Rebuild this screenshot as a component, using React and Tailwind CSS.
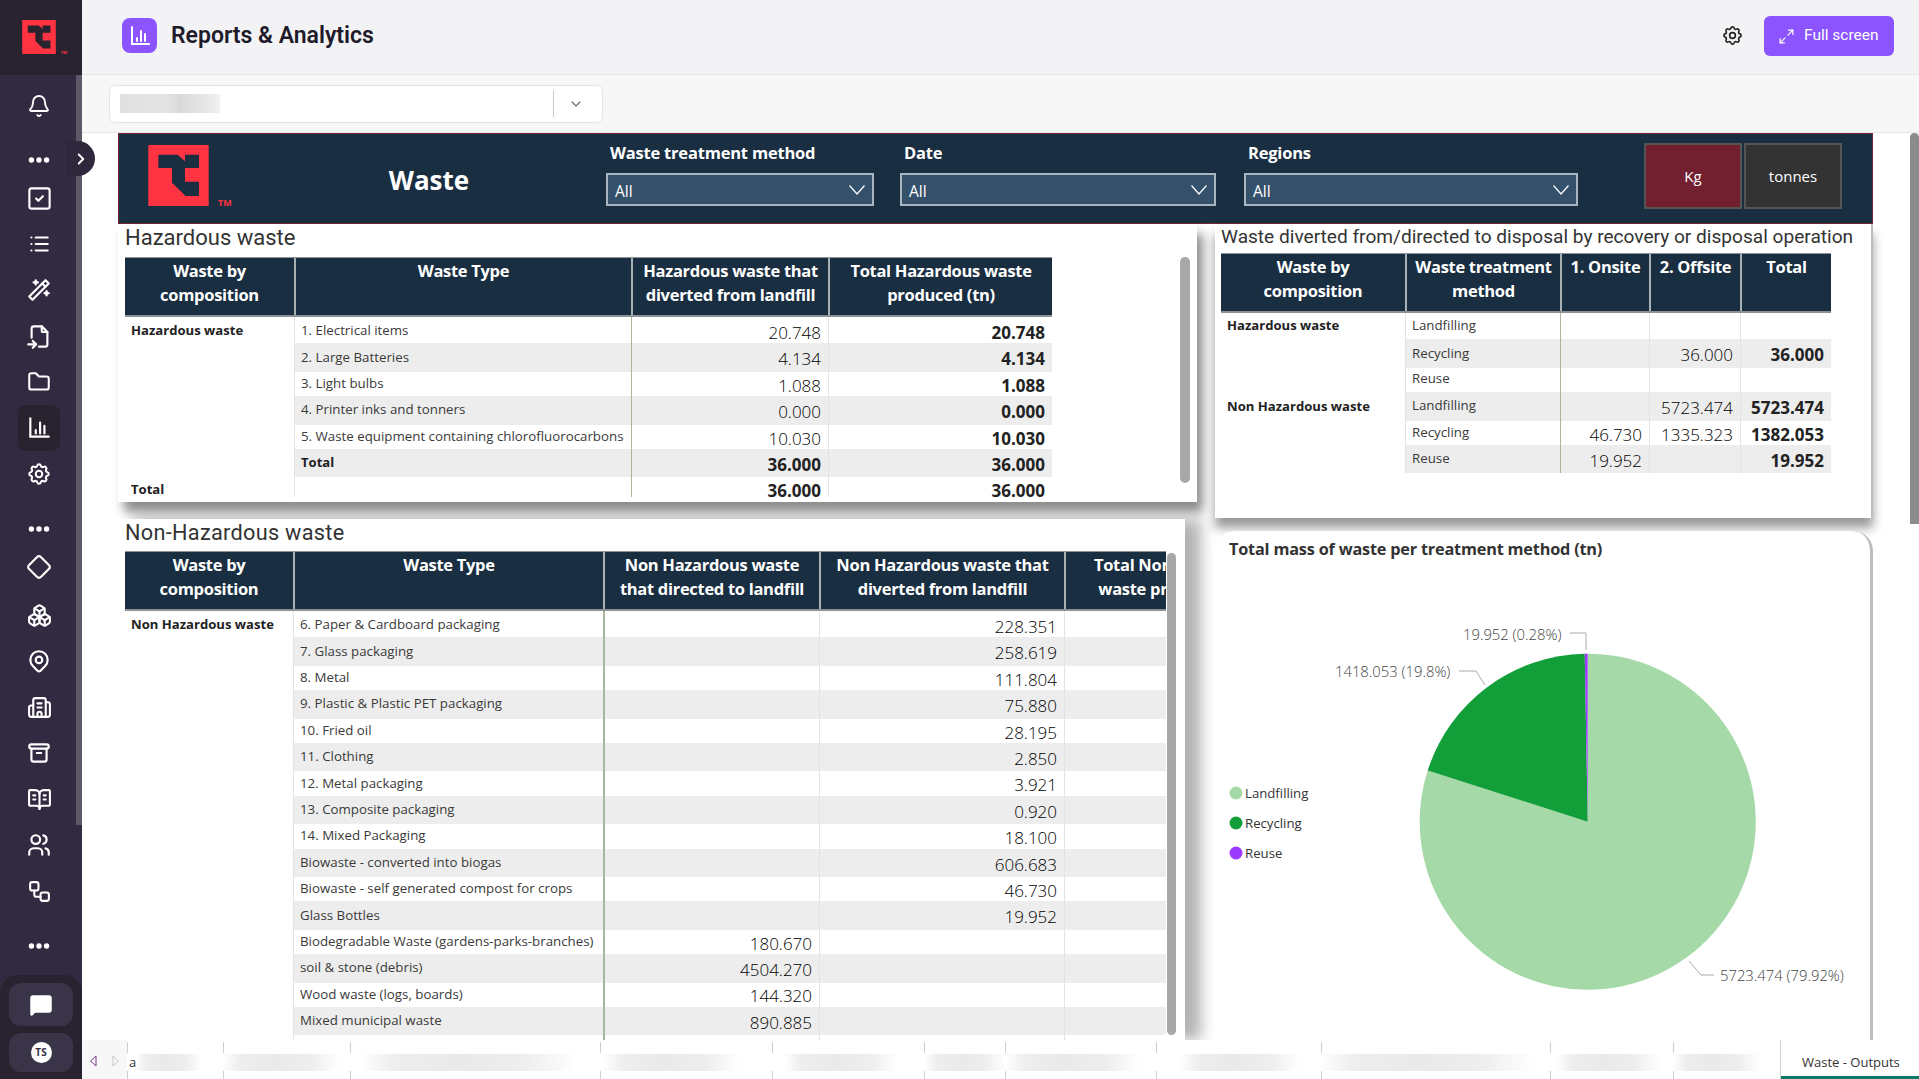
import React from 'react';
import { Bell, Boxes, BookOpenText, Building2, Diamond, Maximize2, MessageSquare, Workflow, ChevronDown, ChevronRight } from 'lucide-react';
import { TbDots, TbSquareCheck, TbList, TbWand, TbFileImport, TbFolder, TbSettings, TbMapPin, TbArchive, TbUsers } from 'react-icons/tb';

const ChartIcon = ({ className }) => (
  <svg viewBox="0 0 24 24" fill="none" stroke="currentColor" strokeWidth="2" strokeLinecap="round" className={className}>
    <path d="M4 3v17h17" />
    <path d="M9 14v3M13 7v10M17 10v7" />
  </svg>
);

const Logo = ({ className, glyph }) => (
  <svg viewBox="0 0 181 183" className={className}>
    <rect width="181" height="183" fill="#ff3341" />
    <path d="M30 29H88L110 49V29H152V69H110V110H152V153H112L71 113V69H30Z" fill={glyph} />
  </svg>
);

const Blur = ({ className }) => (
  <div className={`h-[17px] bg-[linear-gradient(90deg,#ffffff,#eeeeee_15%,#e8e9e8_45%,#eeeeee_75%,#ffffff)] ${className}`} />
);

const NavItem = ({ children, className = '' }) => (
  <div className={`flex h-[46px] items-center justify-center text-white ${className}`}>{children}</div>
);

const Dots = ({ className = '' }) => (
  <div className={`flex h-[30px] items-center justify-center text-white ${className}`}>
    <TbDots size={26} strokeWidth={3} />
  </div>
);

const Sidebar = () => (
  <aside className="relative flex w-[82px] shrink-0 flex-col bg-[#322a41]">
    <div className="flex h-[75px] shrink-0 items-start bg-[#29232f] pl-[22px] pt-[20px]">
      <Logo className="h-[34px] w-[34px]" glyph="#29232f" />
      <span className="ml-[5px] mt-[30px] text-[4px] font-bold text-[#ff3341]">TM</span>
    </div>
    <nav className="flex w-[76px] flex-col pt-[8px] pl-[2px]">
      <NavItem><Bell size={24} strokeWidth={1.8} /></NavItem>
      <Dots className="mt-[16px]" />
      <NavItem><TbSquareCheck size={27} strokeWidth={1.9} /></NavItem>
      <NavItem><TbList size={26} strokeWidth={2} /></NavItem>
      <NavItem><TbWand size={26} strokeWidth={2} /></NavItem>
      <NavItem><TbFileImport size={27} strokeWidth={1.9} /></NavItem>
      <NavItem><TbFolder size={26} strokeWidth={1.9} /></NavItem>
      <NavItem className="mx-[16px] rounded-lg bg-[#29232f] text-[#b9c3f7]"><ChartIcon className="h-[26px] w-[26px]" /></NavItem>
      <NavItem><TbSettings size={26} strokeWidth={1.9} /></NavItem>
      <Dots className="mt-[17px]" />
      <NavItem><Diamond size={26} strokeWidth={2} /></NavItem>
      <NavItem className="mt-[2px]"><Boxes size={25} strokeWidth={2} /></NavItem>
      <NavItem><TbMapPin size={26} strokeWidth={2} /></NavItem>
      <NavItem><Building2 size={25} strokeWidth={2} /></NavItem>
      <NavItem><TbArchive size={26} strokeWidth={2} /></NavItem>
      <NavItem><BookOpenText size={25} strokeWidth={2} /></NavItem>
      <NavItem><TbUsers size={26} strokeWidth={2} /></NavItem>
      <NavItem><Workflow size={25} strokeWidth={2} /></NavItem>
      <Dots className="mt-[17px]" />
    </nav>
    <div className="mt-auto flex h-[104px] flex-col gap-[7px] rounded-t-[18px] bg-[#29232f] px-[9px] pt-[8px]">
      <div className="flex h-[43px] items-center justify-center rounded-xl bg-[#3a3448] text-white">
        <MessageSquare size={24} fill="currentColor" strokeWidth={1.5} />
      </div>
      <div className="flex h-[39px] items-center justify-center rounded-xl bg-[#3a3448]">
        <div className="flex h-[21px] w-[21px] items-center justify-center rounded-full bg-white text-[10px] font-bold text-[#322a41]">TS</div>
      </div>
    </div>
    <div className="absolute left-[76px] top-[75px] h-[750px] w-[6px] bg-[#5d5767]" />
    <div className="absolute left-[66px] top-[141px] z-20 flex h-[35px] w-[29px] items-center justify-center rounded-r-full bg-[#2f283c] text-white">
      <ChevronRight size={18} strokeWidth={2.5} />
    </div>
  </aside>
);

const Header = () => (
  <header className="flex h-[75px] shrink-0 items-center border-b border-[#e6e6e8] bg-[#f3f3f5] pb-[3px] pl-[40px] pr-[25px]">
    <div className="flex h-[35px] w-[35px] items-center justify-center rounded-lg bg-[#8b54ff] text-white">
      <ChartIcon className="h-[24px] w-[24px]" />
    </div>
    <h1 className="ml-[14px] pt-[2px] font-['Roboto',sans-serif] text-[23px] font-semibold text-[#1f1b2b]">Reports &amp; Analytics</h1>
    <TbSettings size={23} strokeWidth={1.7} className="ml-auto mr-[20px] text-[#222]" />
    <button className="flex h-[40px] w-[130px] items-center rounded-md bg-[#8b54ff] pl-[14px] pt-[1px] font-['Roboto',sans-serif] text-[15.5px] text-white">
      <Maximize2 size={17} strokeWidth={1.7} />
      <span className="ml-[9px]">Full screen</span>
    </button>
  </header>
);

const FilterBar = () => (
  <div className="flex h-[58px] shrink-0 items-center border-b border-[#e6e6e6] bg-[#f7f7f7] pl-[27px]">
    <div className="flex h-[38px] w-[494px] items-center rounded-md border border-[#e4e4e4] bg-white pl-[10px]">
      <div className="h-[19px] w-[100px] bg-[linear-gradient(90deg,#e0e0e0,#e4e4e4_45%,#d9d9d9_60%,#e6e6e6_85%,#f2f2f2)]" />
      <div className="ml-auto h-[27px] w-px bg-[#c9c9c9]" />
      <ChevronDown size={16} className="ml-[14px] mr-[18px] text-[#666]" strokeWidth={1.6} />
    </div>
  </div>
);

const Slicer = ({ label, className }) => (
  <div className={`flex flex-col pt-[7px] ${className}`}>
    <span className="ml-[4px] h-[23px] text-[16.5px] font-bold leading-[23px] tracking-[-0.2px] text-white">{label}</span>
    <div className="mt-[9px] flex h-[33px] items-center justify-between border-2 border-[#aab6bf] bg-[#34506b] pl-[7px] pr-[7px] text-[15.5px] text-white">
      <span className="pt-[5px]">All</span>
      <svg viewBox="0 0 16 10" className="h-[10px] w-[16px]" fill="none" stroke="#ffffff" strokeWidth="1.2"><path d="M0.5 0.5L8 9L15.5 0.5" /></svg>
    </div>
  </div>
);

const Banner = () => (
  <div className="flex h-[91px] w-[1755px] shrink-0 border border-[#7a2535] bg-[#1a2e42]">
    <div className="flex w-[129px] shrink-0 items-start pl-[29px] pt-[11px]">
      <Logo className="h-[61px] w-[61px]" glyph="#1a2e42" />
      <span className="ml-[9px] mt-[53px] text-[9px] font-bold leading-[10px] text-[#ff3341]">TM</span>
    </div>
    <div className="flex w-[358px] shrink-0 items-center justify-center pl-[4px] pt-[3px] text-[26px] font-bold text-white">Waste</div>
    <Slicer label="Waste treatment method" className="w-[268px] shrink-0" />
    <Slicer label="Date" className="ml-[26px] w-[316px] shrink-0" />
    <Slicer label="Regions" className="ml-[28px] w-[334px] shrink-0" />
    <div className="ml-[66px] mt-[9px] flex h-[66px] w-[98px] shrink-0 items-center justify-center border-2 border-[#555] bg-[#72202f] text-[15px] text-white">Kg</div>
    <div className="ml-[2px] mt-[9px] flex h-[66px] w-[98px] shrink-0 items-center justify-center border-2 border-[#555] bg-[#333333] text-[15px] text-white">tonnes</div>
  </div>
);

const cellStyles = {
  group: 'pl-[6px] text-[13.1px] font-bold text-[#222]',
  label: 'pl-[6px] text-[13.3px] text-[#3a3a3a]',
  labelBold: 'pl-[6px] text-[13.1px] font-bold text-[#222]',
  num: 'justify-end pr-[7px] pt-[3px] text-[17px] font-light text-black',
  total: 'justify-end pr-[7px] pt-[3px] text-[17px] font-bold text-[#222]',
};

const ReportTable = ({ gridClass, widthClass, headers, lines, rows }) => (
  <div className={widthClass}>
    <div className={`grid h-[60px] border-y border-b-2 border-[#8d9296] bg-[#1a2e42] ${gridClass}`}>
      {headers.map((h, i) => (
        <div key={i} className={`whitespace-pre-line pt-[1px] text-center text-[16.5px] font-bold leading-[24px] tracking-[-0.3px] text-white ${i > 0 ? 'border-l-2 border-[#a9b0b4]' : ''}`}>{h}</div>
      ))}
    </div>
    {rows.map((row, r) => (
      <div key={r} className={`grid h-[26.4px] ${gridClass}`}>
        {row.cells.map((c, i) => (
          <div key={i} className={`flex items-center whitespace-nowrap ${lines[i]} ${row.shaded && i > 0 ? 'bg-[#ededed]' : ''} ${c ? cellStyles[c[0]] : ''}`}>
            {c ? c[1] : ''}
          </div>
        ))}
      </div>
    ))}
  </div>
);

const hazardRows = [
  { cells: [['group', 'Hazardous waste'], ['label', '1. Electrical items'], ['num', '20.748'], ['total', '20.748']] },
  { shaded: true, cells: [null, ['label', '2. Large Batteries'], ['num', '4.134'], ['total', '4.134']] },
  { cells: [null, ['label', '3. Light bulbs'], ['num', '1.088'], ['total', '1.088']] },
  { shaded: true, cells: [null, ['label', '4. Printer inks and tonners'], ['num', '0.000'], ['total', '0.000']] },
  { cells: [null, ['label', '5. Waste equipment containing chlorofluorocarbons'], ['num', '10.030'], ['total', '10.030']] },
  { shaded: true, cells: [null, ['labelBold', 'Total'], ['total', '36.000'], ['total', '36.000']] },
  { cells: [['group', 'Total'], null, ['total', '36.000'], ['total', '36.000']] },
];

const nonHazardData = [
  ['6. Paper & Cardboard packaging', '', '228.351'],
  ['7. Glass packaging', '', '258.619'],
  ['8. Metal', '', '111.804'],
  ['9. Plastic & Plastic PET packaging', '', '75.880'],
  ['10. Fried oil', '', '28.195'],
  ['11. Clothing', '', '2.850'],
  ['12. Metal packaging', '', '3.921'],
  ['13. Composite packaging', '', '0.920'],
  ['14. Mixed Packaging', '', '18.100'],
  ['Biowaste - converted into biogas', '', '606.683'],
  ['Biowaste - self generated compost for crops', '', '46.730'],
  ['Glass Bottles', '', '19.952'],
  ['Biodegradable Waste (gardens-parks-branches)', '180.670', ''],
  ['soil & stone (debris)', '4504.270', ''],
  ['Wood waste (logs, boards)', '144.320', ''],
  ['Mixed municipal waste', '890.885', ''],
  ['', '', ''],
];

const nonHazardRows = nonHazardData.map((d, i) => ({
  shaded: i % 2 === 1,
  cells: [
    i === 0 ? ['group', 'Non Hazardous waste'] : null,
    ['label', d[0]],
    d[1] ? ['num', d[1]] : null,
    d[2] ? ['num', d[2]] : null,
    null,
  ],
}));

const disposalRows = [
  { cells: [['group', 'Hazardous waste'], ['label', 'Landfilling'], null, null, null] },
  { shaded: true, cells: [null, ['label', 'Recycling'], null, ['num', '36.000'], ['total', '36.000']] },
  { cells: [null, ['label', 'Reuse'], null, null, null] },
  { shaded: true, cells: [['group', 'Non Hazardous waste'], ['label', 'Landfilling'], null, ['num', '5723.474'], ['total', '5723.474']] },
  { cells: [null, ['label', 'Recycling'], ['num', '46.730'], ['num', '1335.323'], ['total', '1382.053']] },
  { shaded: true, cells: [null, ['label', 'Reuse'], ['num', '19.952'], null, ['total', '19.952']] },
];

const PieChart = () => (
  <svg viewBox="0 0 652 480" className="h-[480px] w-[652px] font-['Open_Sans',sans-serif]">
    <path d="M372.7 262.7V94.7A168 168 0 1 1 212.7 211.6Z" fill="#a5d9a8" />
    <path d="M372.7 262.7L212.7 211.6A168 168 0 0 1 369.74 94.73Z" fill="#129e38" />
    <path d="M372.7 262.7L369.74 94.73A168 168 0 0 1 372.7 94.7Z" fill="#9b3bff" />
    <g fill="none" stroke="#aaaaaa" strokeWidth="1">
      <path d="M355 74H371V91" />
      <path d="M244 112H261L270 126" />
      <path d="M474 402L486 416H499" />
    </g>
    <g fontSize="14.8" fontWeight="300" fill="#444444">
      <text x="248" y="81">19.952 (0.28%)</text>
      <text x="120" y="118">1418.053 (19.8%)</text>
      <text x="505" y="422">5723.474 (79.92%)</text>
    </g>
    <circle cx="21" cy="234" r="6.5" fill="#a5d9a8" />
    <circle cx="21" cy="264" r="6.5" fill="#129e38" />
    <circle cx="21" cy="294" r="6.5" fill="#9b3bff" />
    <g fontSize="13.2" fill="#333333">
      <text x="30" y="239">Landfilling</text>
      <text x="30" y="269">Recycling</text>
      <text x="30" y="299">Reuse</text>
    </g>
  </svg>
);

const Report = () => (
  <div className="flex min-h-0 flex-1 flex-col overflow-hidden bg-white pl-[36px]">
    <Banner />
    <div className="flex min-h-0 flex-1">
      <div className="flex w-[1079px] shrink-0 flex-col">
        <section className="relative z-10 h-[278px] shrink-0 bg-white pl-[7px] shadow-[6px_10px_10px_rgba(0,0,0,0.45)]">
          <h2 className="h-[33px] font-['Roboto',sans-serif] text-[22px] leading-[28px] text-[#333]">Hazardous waste</h2>
          <div className="h-[240px] overflow-hidden">
            <ReportTable
              widthClass="w-[927px]"
              gridClass="grid-cols-[169px_337px_197px_224px]"
              headers={['Waste by\ncomposition', 'Waste Type', 'Hazardous waste that\ndiverted from landfill', 'Total Hazardous waste\nproduced (tn)']}
              lines={['', 'border-l border-[#e3e3e3]', 'border-l border-[#a9b79e]', 'border-l border-[#e3e3e3]']}
              rows={hazardRows}
            />
          </div>
          <div className="absolute right-[7px] top-[33px] h-[226px] w-[10px] rounded-full bg-[#a8a8a8]" />
        </section>
        <section className="relative z-20 mt-[17px] min-h-0 w-[1067px] flex-1 bg-white pl-[7px] shadow-[16px_0_14px_rgba(0,0,0,0.3)]">
          <h2 className="h-[32px] font-['Roboto',sans-serif] text-[21.7px] leading-[28px] tracking-[0.3px] text-[#333]">Non-Hazardous waste</h2>
          <div className="h-[489px] w-[1041px] overflow-hidden">
            <ReportTable
              widthClass="w-[1165px]"
              gridClass="grid-cols-[168px_310px_216px_245px_226px]"
              headers={['Waste by\ncomposition', 'Waste Type', 'Non Hazardous waste\nthat directed to landfill', 'Non Hazardous waste that\ndiverted from landfill', 'Total Non-Hazardous\nwaste produced (tn)']}
              lines={['', 'border-l border-[#e3e3e3]', 'border-l-2 border-[#a9b79e]', 'border-l border-[#e3e3e3]', 'border-l border-[#e3e3e3]']}
              rows={nonHazardRows}
            />
          </div>
          <div className="absolute right-[9px] top-[34px] h-[482px] w-[9px] rounded-full bg-[#a8a8a8]" />
        </section>
      </div>
      <div className="flex w-[676px] shrink-0 flex-col pl-[18px]">
        <section className="relative z-30 h-[294px] shrink-0 border-r-[2px] border-[#bdbdbd] bg-white pl-[6px] shadow-[0_10px_10px_rgba(0,0,0,0.4)]">
          <h2 className="h-[29px] whitespace-nowrap font-['Roboto',sans-serif] text-[19.1px] leading-[25px] text-[#333]">Waste diverted from/directed to disposal by recovery or disposal operation</h2>
          <ReportTable
            widthClass="w-[610px]"
            gridClass="grid-cols-[184px_155px_89px_91px_91px]"
            headers={['Waste by\ncomposition', 'Waste treatment\nmethod', '1. Onsite', '2. Offsite', 'Total']}
            lines={['', 'border-l border-[#e3e3e3]', 'border-l border-[#a9b79e]', 'border-l border-[#e3e3e3]', 'border-l border-[#e3e3e3]']}
            rows={disposalRows}
          />
        </section>
        <section className="relative z-40 mt-[13px] min-h-0 flex-1 rounded-t-[20px] border-r-[3px] border-[#bdbdbd] bg-white">
          <h2 className="h-[28px] pl-[14px] pt-[6px] text-[16.3px] font-bold leading-[24px] tracking-[-0.2px] text-[#333]">Total mass of waste per treatment method (tn)</h2>
          <PieChart />
        </section>
      </div>
    </div>
  </div>
);

const tabs = [
  { w: 'w-[96px]', patch: 'ml-[0px] w-[66px]' },
  { w: 'w-[127px]', patch: 'ml-[-1px] w-[118px]' },
  { w: 'w-[250px]', patch: 'ml-[10px] w-[219px]' },
  { w: 'w-[172px]', patch: 'ml-[3px] w-[137px]' },
  { w: 'w-[152px]', patch: 'ml-[12px] w-[115px]' },
  { w: 'w-[81px]', patch: 'ml-[1px] w-[80px]' },
  { w: 'w-[151px]', patch: 'ml-[0px] w-[135px]' },
  { w: 'w-[165px]', patch: 'ml-[24px] w-[120px]' },
  { w: 'w-[229px]', patch: 'ml-[-1px] w-[215px]' },
  { w: 'w-[123px]', patch: 'ml-[6px] w-[105px]' },
  { w: 'w-[107px]', patch: 'ml-[0px] w-[87px]' },
];

const TabBar = () => (
  <div className="flex h-[39px] shrink-0 bg-white">
    <div className="flex w-[45px] shrink-0 items-center gap-[15px] bg-[#f7f7f7] pl-[7px] pt-[3px]">
      <svg viewBox="0 0 8 12" className="h-[12px] w-[8px]" fill="none" stroke="#7a3a8c"><path d="M7 1L1.5 6L7 11Z" /></svg>
      <svg viewBox="0 0 8 12" className="h-[12px] w-[8px]" fill="none" stroke="#c4c4c4"><path d="M1 1L6.5 6L1 11Z" /></svg>
    </div>
    {tabs.map((t, i) => (
      <div key={i} className={`relative flex shrink-0 items-center overflow-visible pt-[5px] ${t.w} ${i === 0 ? 'text-[13px] text-[#333]' : ''}`}>
        <div className="absolute bottom-0 left-0 top-[2px] w-px bg-[linear-gradient(180deg,#cfcfcf_0,#cfcfcf_30%,transparent_30%,transparent_78%,#cfcfcf_78%)]" />
        {i === 0 && <span className="ml-[2px] leading-none">a</span>}
        <Blur className={`relative ${t.patch}`} />
      </div>
    ))}
    <div className="flex flex-1 flex-col border-l border-[#cfcfcf]">
      <span className="flex-1 pl-[21px] pt-[13px] text-[13px] leading-[18px] text-[#333]">Waste - Outputs</span>
      <div className="h-[3px] bg-[#117865]" />
    </div>
  </div>
);

export default function App() {
  return (
    <div className="flex h-[1079px] w-full overflow-hidden bg-white font-['Open_Sans',sans-serif]">
      <Sidebar />
      <main className="relative flex min-w-0 flex-1 flex-col">
        <Header />
        <FilterBar />
        <Report />
        <TabBar />
        <div className="absolute right-0 top-[133px] z-50 h-[391px] w-[9px] rounded-t-md bg-[#8c8c8c]" />
      </main>
    </div>
  );
}
